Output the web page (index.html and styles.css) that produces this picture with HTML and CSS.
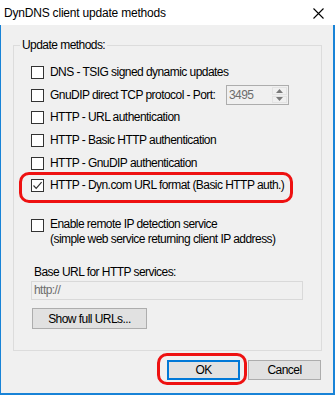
FILE: index.html
```html
<!DOCTYPE html>
<html>
<head>
<meta charset="utf-8">
<link rel="stylesheet" href="styles.css">
</head>
<body>
<div class="window">
  <div class="titlebar">
    <span class="title">DynDNS client update methods</span>
    <svg class="close" width="11" height="11" viewBox="0 0 11 11"><path d="M0.5 0.5 L10.5 10.5 M10.5 0.5 L0.5 10.5" stroke="#000" stroke-width="1.1" fill="none"/></svg>
  </div>
  <div class="client">
    <fieldset class="group">
      <legend>Update methods:</legend>
      <div class="group-body">
        <div class="row"><span class="cb"></span><span class="lbl">DNS - TSIG signed dynamic updates</span></div>
        <div class="row"><span class="cb"></span><span class="lbl port-lbl">GnuDIP direct TCP protocol - Port:</span>
          <div class="spin">
            <span class="spin-val">3495</span>
            <div class="spin-btns">
              <span class="spin-btn"><svg width="7" height="4" viewBox="0 0 7 4"><path d="M0 4 L3.5 0 L7 4 Z" fill="#7a7a7a"/></svg></span>
              <span class="spin-btn"><svg width="7" height="4" viewBox="0 0 7 4"><path d="M0 0 L3.5 4 L7 0 Z" fill="#7a7a7a"/></svg></span>
            </div>
          </div>
        </div>
        <div class="row"><span class="cb"></span><span class="lbl">HTTP - URL authentication</span></div>
        <div class="row"><span class="cb"></span><span class="lbl">HTTP - Basic HTTP authentication</span></div>
        <div class="row"><span class="cb"></span><span class="lbl">HTTP - GnuDIP authentication</span></div>
        <div class="row"><span class="cb"><svg width="11" height="11" viewBox="0 0 11 11"><path d="M1.5 5.5 L4.2 8.3 L9.6 2.2" stroke="#333" stroke-width="1.2" fill="none"/></svg></span><span class="lbl">HTTP - Dyn.com URL format (Basic HTTP auth.)</span></div>
        <div class="row-multi"><span class="cb"></span><span class="lbl">Enable remote IP detection service<br>(simple web service returning client IP address)</span></div>
        <div class="field-label">Base URL for HTTP services:</div>
        <div class="textfield">http://</div>
        <button class="btn show-btn">Show full URLs...</button>
      </div>
    </fieldset>
    <div class="buttons">
      <button class="btn ok">OK</button>
      <button class="btn">Cancel</button>
    </div>
    <div class="mark mark-row"></div>
    <div class="mark mark-ok"></div>
  </div>
</div>
</body>
</html>
```
FILE: styles.css
```css
* { box-sizing: border-box; }
html, body { margin: 0; padding: 0; }
body {
  font-family: "Segoe UI", "Liberation Sans", Arial, sans-serif;
  font-size: 12px;
  letter-spacing: -0.55px;
  color: #000;
}
.window {
  width: 335px;
  height: 395px;
  display: flex;
  flex-direction: column;
  position: relative;
}
.titlebar {
  height: 25px;
  background: #fff;
  display: flex;
  align-items: center;
  justify-content: space-between;
  padding: 0 11px 0 4px;
  flex: none;
}
.title { font-size: 12px; line-height: 15px; margin-top: 2px; letter-spacing: -0.2px; }
.close { margin-top: 1px; }
.client {
  flex: 1;
  background: #f0f0f0;
  border-left: 1px solid #1883d7;
  border-right: 2px solid #1883d7;
  border-bottom: 2px solid #1883d7;
  padding: 13px 12px 0 12px;
  position: relative;
}
.group {
  margin: 0;
  width: 309px;
  border: 1px solid #dcdcdc;
  padding: 0 0 21px 0;
  min-width: 0;
}
.group legend {
  margin-left: 6px;
  padding: 0 2px;
  line-height: 14px;
  font-size: 12px;
}
.group-body {
  padding: 9px 0 0 17px;
  display: flex;
  flex-direction: column;
  align-items: flex-start;
}
.row {
  height: 22.7px;
  display: flex;
  align-items: center;
}
.cb {
  width: 13px;
  height: 13px;
  border: 1px solid #333;
  background: #fff;
  flex: none;
  display: flex;
  align-items: center;
  justify-content: center;
}
.lbl {
  margin-left: 6px;
  line-height: 15px;
  white-space: nowrap;
}
.port-lbl { width: 176px; }
.spin {
  width: 63px;
  height: 20px;
  border: 1px solid #adadad;
  background: #f0f0f0;
  display: flex;
  align-items: center;
  justify-content: space-between;
  padding: 0 1px 0 2px;
}
.spin-val { color: #6d6d6d; line-height: 15px; }
.spin-btns {
  width: 15px;
  height: 16px;
  display: flex;
  flex-direction: column;
  gap: 1px;
}
.spin-btn {
  flex: 1;
  background: #f0f0f0;
  border: 1px solid #e3e3e3;
  display: flex;
  align-items: center;
  justify-content: center;
}
.row-multi {
  margin-top: 20px;
  display: flex;
  align-items: flex-start;
}
.row-multi .cb { margin-top: 2px; }
.field-label {
  margin-top: 18px;
  margin-left: 3px;
  line-height: 15px;
}
.textfield {
  margin-top: 1px;
  width: 272px;
  height: 19px;
  border: 1px solid #d9d9d9;
  background: #f0f0f0;
  color: #6d6d6d;
  padding-left: 2px;
  line-height: 17px;
}
.btn {
  font-family: inherit;
  font-size: 12px;
  letter-spacing: inherit;
  color: #000;
  background: #e1e1e1;
  border: 1px solid #adadad;
  padding: 0;
  margin: 0;
  height: 21px;
}
.show-btn {
  margin-top: 8px;
  margin-left: 1px;
  width: 115px;
}
.buttons {
  margin-top: 9px;
  display: flex;
  justify-content: flex-end;
  gap: 8px;
}
.buttons .btn { width: 73px; height: 20px; }
.buttons .ok { border: 2px solid #0078d7; }
.mark {
  position: absolute;
  border: 3px solid #ee1111;
  border-radius: 10px;
}
.mark-row { left: 18px; top: 147px; width: 274px; height: 31px; }
.mark-ok { left: 156px; top: 328px; width: 90px; height: 32px; }
```
